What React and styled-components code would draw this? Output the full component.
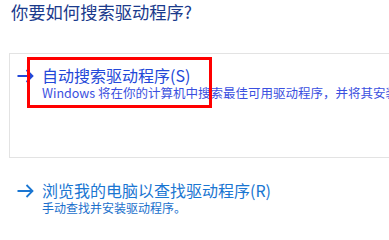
import styled, { createGlobalStyle } from 'styled-components';

const GlobalStyle = createGlobalStyle`
  html, body {
    margin: 0;
    padding: 0;
    background: #fff;
    overflow: hidden;
  }
  body {
    font-family: "Noto Sans CJK SC", "Noto Sans", sans-serif;
  }
`;

const Arrow = ({ color }) => (
  <svg width="17" height="14" viewBox="0 0 17 14">
    <path d="M0.5 7 H15.5 M9.5 1 L15.5 7 L9.5 13" fill="none" stroke={color} strokeWidth="1.8" />
  </svg>
);

const options = [
  {
    title: '自动搜索驱动程序(S)',
    desc: 'Windows 将在你的计算机中搜索最佳可用驱动程序，并将其安装在你的设备上。',
    color: '#2348d8',
    descColor: '#3a4fe0',
    descSize: 12.5,
  },
  {
    title: '浏览我的电脑以查找驱动程序(R)',
    desc: '手动查找并安装驱动程序。',
    color: '#1a76d2',
    descColor: '#1a6fcc',
    descSize: 12,
  },
];

const Option = ({ option }) => (
  <Row>
    <ArrowCell><Arrow color={option.color} /></ArrowCell>
    <Texts>
      <Heading $color={option.color}>{option.title}</Heading>
      <Desc $color={option.descColor} $size={option.descSize}>{option.desc}</Desc>
    </Texts>
  </Row>
);

const App = () => {
  const [first, second] = options;
  return (
    <Page>
      <GlobalStyle />
      <Title>你要如何搜索驱动程序?</Title>
      <Panel>
        <Option option={first} />
        <Highlight />
      </Panel>
      <Plain>
        <Option option={second} />
      </Plain>
    </Page>
  );
};

export default App;

const Page = styled.div`
  width: 389px;
  height: 221px;
  overflow: hidden;
`;

const Title = styled.h1`
  margin: 0 0 29px;
  padding-left: 11px;
  font-size: 17.3px;
  font-weight: normal;
  line-height: 24px;
  color: #1a3a8c;
  white-space: nowrap;
`;

const Panel = styled.div`
  position: relative;
  box-sizing: border-box;
  margin-left: 9px;
  width: 420px;
  height: 105px;
  border: 1px solid #e3e3e3;
  padding: 12px 0 0 7px;
`;

const Highlight = styled.div`
  position: absolute;
  left: 17px;
  top: 3px;
  width: 185px;
  height: 51px;
  box-sizing: border-box;
  border: 3px solid #ff0000;
`;

const Plain = styled.div`
  margin-top: 23px;
  padding-left: 17px;
`;

const Row = styled.div`
  display: grid;
  grid-template-columns: 17px 1fr;
  column-gap: 8px;
  align-items: start;
`;

const ArrowCell = styled.div`
  height: 19px;
  display: flex;
  align-items: center;
`;

const Texts = styled.div`
  display: flex;
  flex-direction: column;
  white-space: nowrap;
`;

const Heading = styled.div`
  font-size: 16px;
  line-height: 19px;
  color: ${p => p.$color};
`;

const Desc = styled.div`
  font-size: ${p => p.$size}px;
  line-height: 16px;
  color: ${p => p.$color};
`;
